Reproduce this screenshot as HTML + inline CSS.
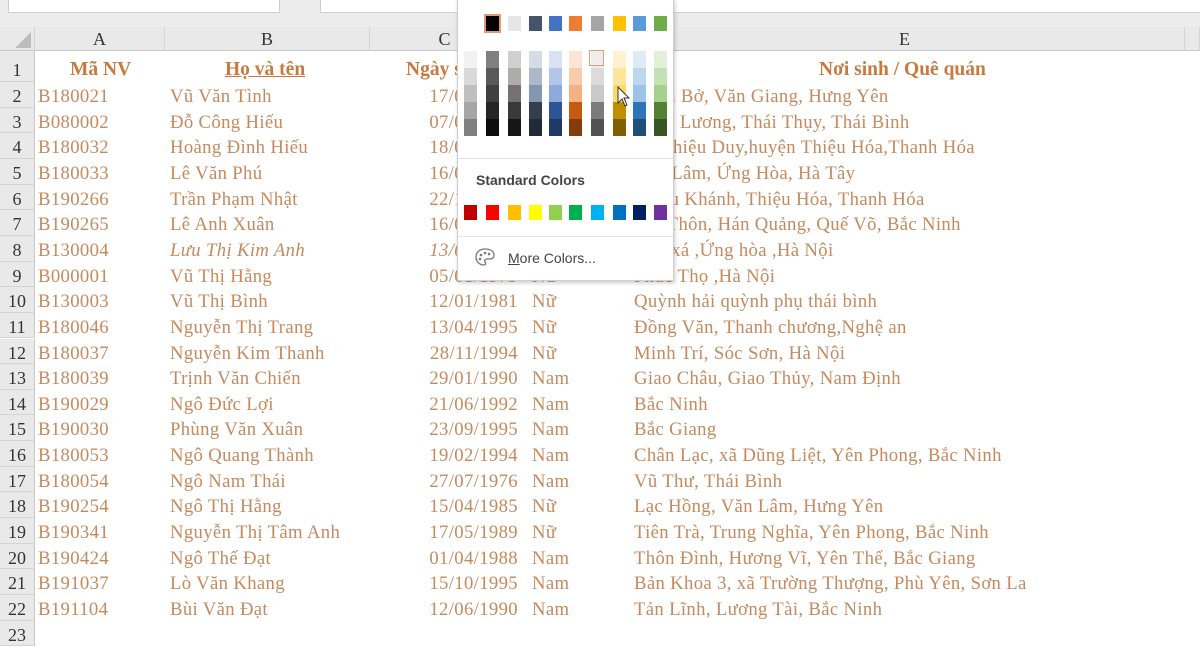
<!DOCTYPE html>
<html><head><meta charset="utf-8">
<style>
body{margin:0;width:1200px;height:630px;overflow:hidden;background:#fff;position:relative;font-family:"Liberation Serif",serif;}
.top{position:absolute;left:0;top:0;width:1200px;height:27px;background:#ececec;}
.nb{position:absolute;left:8px;top:0;width:270px;height:12px;background:#fff;border:1px solid #d0d0d0;border-top:none;}
.fb{position:absolute;left:320px;top:0;width:880px;height:12px;background:#fff;border:1px solid #d0d0d0;border-top:none;}
.ch{position:absolute;top:27px;height:24px;background:#e9e9e9;border-bottom:1px solid #c8c8c8;font-size:18px;color:#333;text-align:center;line-height:24px;box-sizing:border-box;border-right:1px solid #d4d4d4;}
.rh{position:absolute;left:0;width:35px;background:#e9e9e9;border-right:1px solid #c8c8c8;border-bottom:1px solid #d4d4d4;box-sizing:border-box;font-size:18px;color:#333;text-align:center;}
.c{position:absolute;font-size:18.7px;letter-spacing:0.35px;color:#c48a5e;white-space:nowrap;}
.h{font-weight:bold;color:#c87a3e;font-size:19.5px;letter-spacing:0;}
.pop{position:absolute;left:457px;top:-2px;width:215px;height:281px;background:#fff;border:1px solid #cfcfcf;box-shadow:1px 2px 4px rgba(0,0,0,.2);}
.sw{position:absolute;width:13px;height:15px;}
.col{position:absolute;width:13px;top:52px;}
.col div{height:17px;}
</style></head><body>
<div class="top"><div class="nb"></div><div class="fb"></div></div>
<div class="ch" style="left:0;width:35px;"><svg width="16" height="16" style="position:absolute;left:15px;top:5px"><polygon points="16,0 16,16 0,16" fill="#bdbdbd"/></svg></div>
<div class="ch" style="left:35px;width:130px;">A</div>
<div class="ch" style="left:165px;width:205px;">B</div>
<div class="ch" style="left:370px;width:150px;">C</div>
<div class="ch" style="left:520px;width:105px;">D</div>
<div class="ch" style="left:625px;width:560px;">E</div>
<div class="ch" style="left:1185px;width:15px;"></div>

<div id="rows"></div>
<div class="rh" style="top:51px;height:31px;line-height:38px;">1</div>
<div class="c h" style="left:70px;top:59px;">Mã NV</div>
<div class="c h" style="left:225px;top:59px;text-decoration:underline;">Họ và tên</div>
<div class="c h" style="left:406px;top:59px;">Ngày sinh</div>
<div class="c h" style="left:819px;top:59px;">Nơi sinh / Quê quán</div>

<script>
var d=[
["B180021","Vũ Văn Tình","17/05/1990","Nam","Xuân Bở, Văn Giang, Hưng Yên"],
["B080002","Đỗ Công Hiếu","07/08/1980","Nam","Thụy Lương, Thái Thụy, Thái Bình"],
["B180032","Hoàng Đình Hiếu","18/09/1994","Nam","Xã Thiệu Duy,huyện Thiệu Hóa,Thanh Hóa"],
["B180033","Lê Văn Phú","16/04/1994","Nam","Hòa Lâm, Ứng Hòa, Hà Tây"],
["B190266","Trần Phạm Nhật","22/10/1995","Nam","Thiệu Khánh, Thiệu Hóa, Thanh Hóa"],
["B190265","Lê Anh Xuân","16/03/1994","Nam","Đại Thôn, Hán Quảng, Quế Võ, Bắc Ninh"],
["B130004","Lưu Thị Kim Anh","13/06/1985","Nữ","Hòa xá ,Ứng hòa ,Hà Nội"],
["B000001","Vũ Thị Hằng","05/01/1979","Nữ","Phúc Thọ ,Hà Nội"],
["B130003","Vũ Thị Bình","12/01/1981","Nữ","Quỳnh hải quỳnh phụ thái bình"],
["B180046","Nguyễn Thị Trang","13/04/1995","Nữ","Đồng Văn, Thanh chương,Nghệ an"],
["B180037","Nguyễn Kim Thanh","28/11/1994","Nữ","Minh Trí, Sóc Sơn, Hà Nội"],
["B180039","Trịnh Văn Chiến","29/01/1990","Nam","Giao Châu, Giao Thủy, Nam Định"],
["B190029","Ngô Đức Lợi","21/06/1992","Nam","Bắc Ninh"],
["B190030","Phùng Văn Xuân","23/09/1995","Nam","Bắc Giang"],
["B180053","Ngô Quang Thành","19/02/1994","Nam","Chân Lạc, xã Dũng Liệt, Yên Phong, Bắc Ninh"],
["B180054","Ngô Nam Thái","27/07/1976","Nam","Vũ Thư, Thái Bình"],
["B190254","Ngô Thị Hằng","15/04/1985","Nữ","Lạc Hồng, Văn Lâm, Hưng Yên"],
["B190341","Nguyễn Thị Tâm Anh","17/05/1989","Nữ","Tiên Trà, Trung Nghĩa, Yên Phong, Bắc Ninh"],
["B190424","Ngô Thế Đạt","01/04/1988","Nam","Thôn Đình, Hương Vĩ, Yên Thế, Bắc Giang"],
["B191037","Lò Văn Khang","15/10/1995","Nam","Bản Khoa 3, xã Trường Thượng, Phù Yên, Sơn La"],
["B191104","Bùi Văn Đạt","12/06/1990","Nam","Tản Lĩnh, Lương Tài, Bắc Ninh"]];
var h="";
for(var i=0;i<22;i++){var t=82+i*25.65;var n=i+2;
h+='<div class="rh" style="top:'+t+'px;height:25.65px;line-height:29px;">'+n+'</div>';
if(i<21){var r=d[i];var it=(i==6)?'font-style:italic;':'';var y=t+4;
h+='<div class="c" style="left:38px;top:'+y+'px">'+r[0]+'</div>';
h+='<div class="c" style="left:170px;top:'+y+'px;'+it+'">'+r[1]+'</div>';
h+='<div class="c" style="left:370px;width:148px;text-align:right;top:'+y+'px;'+it+'">'+r[2]+'</div>';
h+='<div class="c" style="left:532px;top:'+y+'px">'+r[3]+'</div>';
h+='<div class="c" style="left:634px;top:'+y+'px">'+r[4]+'</div>';}}
document.getElementById('rows').innerHTML=h;
</script>

<div class="pop">
<div id="sw"></div>
<div style="position:absolute;left:0;top:159px;width:215px;border-top:1px solid #e2e2e2"></div>
<div style="position:absolute;left:18px;top:173px;font:bold 14px 'Liberation Sans',sans-serif;color:#444;">Standard Colors</div>
<div style="position:absolute;left:0;top:237px;width:215px;border-top:1px solid #e2e2e2"></div>
<svg style="position:absolute;left:16px;top:248px" width="22" height="20" viewBox="0 0 22 20"><path d="M11 2C5 2 2 6 2 10c0 5 4 8 8 8 2 0 2-2 1-3-1-1 0-3 2-3h3c3 0 4-2 4-4 0-4-4-6-9-6z" fill="none" stroke="#777" stroke-width="1.3"/><circle cx="7" cy="8" r="1.3" fill="#777"/><circle cx="11" cy="6" r="1.3" fill="#777"/><circle cx="15" cy="7" r="1.3" fill="#777"/><circle cx="6" cy="12" r="1.3" fill="#777"/></svg>
<div style="position:absolute;left:50px;top:251px;font:14px 'Liberation Sans',sans-serif;color:#444;"><u>M</u>ore Colors...</div>
</div>
<script>
var base=["#ffffff","#000000","#e7e6e6","#44546a","#4472c4","#ed7d31","#a5a5a5","#ffc000","#5b9bd5","#70ad47"];
var sh=[["#f2f2f2","#d9d9d9","#bfbfbf","#a6a6a6","#808080"],["#808080","#595959","#404040","#262626","#0d0d0d"],["#d0cece","#aeabab","#757171","#3a3838","#161616"],["#d6dce4","#adb9ca","#8497b0","#333f4f","#222a35"],["#d9e2f3","#b4c6e7","#8eaadb","#2f5496","#1f3864"],["#fbe5d5","#f7cbac","#f4b183","#c55a11","#843c0b"],["#ededed","#dbdbdb","#c9c9c9","#7b7b7b","#525252"],["#fff2cc","#ffe599","#ffd966","#bf9000","#7f6000"],["#deebf6","#bdd7ee","#9dc3e6","#2e75b5","#1e4e79"],["#e2efd9","#c5e0b3","#a8d08d","#538135","#375623"]];
var st=["#c00000","#ff0000","#ffc000","#ffff00","#92d050","#00b050","#00b0f0","#0070c0","#002060","#7030a0"];
var xs=[6,28,50,71,91,111,133,155,175,196];var o="";
for(var i=0;i<10;i++){var x=xs[i];
o+='<div class="sw" style="left:'+x+'px;top:17px;background:'+base[i]+';'+(i==1?'outline:2px solid #e49a6a;':'')+'"></div>';
o+='<div class="col" style="left:'+x+'px">';for(var j=0;j<5;j++)o+='<div style="background:'+sh[i][j]+'"></div>';o+='</div>';
o+='<div class="sw" style="left:'+x+'px;top:206px;background:'+st[i]+'"></div>';}
o+='<div style="position:absolute;left:131px;top:51px;width:15px;height:16px;border:1px solid #e0a070;box-sizing:border-box;"></div>';
document.getElementById('sw').innerHTML=o;
</script>
<svg style="position:absolute;left:617px;top:86px" width="14" height="22" viewBox="0 0 14 22"><path d="M1 1v16l4-4 3 7 2-1-3-7h5z" fill="#fff" stroke="#333" stroke-width="1"/></svg>
</body></html>
